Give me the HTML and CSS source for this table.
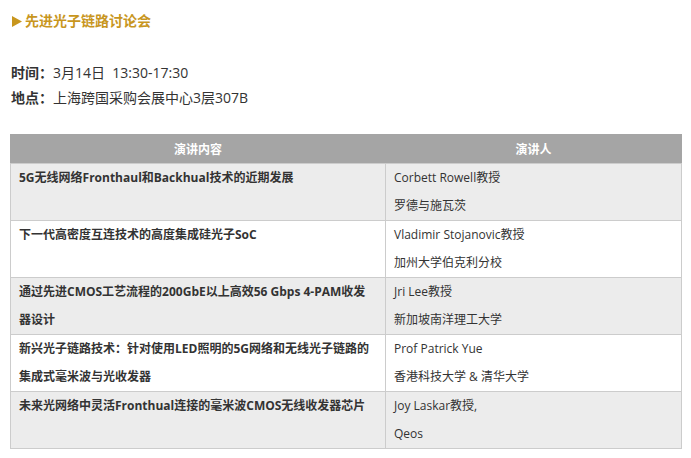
FILE: index.html
```html
<!DOCTYPE html>
<html lang="zh-CN">
<head>
<meta charset="utf-8">
<title>先进光子链路讨论会</title>
<link rel="stylesheet" href="styles.css">
</head>
<body>
<h3 class="title"><svg class="arrow" width="10" height="11" viewBox="0 0 10 11" aria-hidden="true"><polygon points="0,0 10,5.5 0,11" fill="#c8961e"/></svg>先进光子链路讨论会</h3>
<div class="info">
  <p><b>时间：</b>3月14日&nbsp; 13:30-17:30</p>
  <p><b>地点：</b>上海跨国采购会展中心3层307B</p>
</div>
<table class="agenda">
  <colgroup><col class="c-topic"><col class="c-speaker"></colgroup>
  <thead>
    <tr><th>演讲内容</th><th>演讲人</th></tr>
  </thead>
  <tbody>
    <tr class="odd"><td class="topic">5G无线网络Fronthaul和Backhual技术的近期发展</td><td>Corbett Rowell教授<br>罗德与施瓦茨</td></tr>
    <tr><td class="topic">下一代高密度互连技术的高度集成硅光子SoC</td><td>Vladimir Stojanovic教授<br>加州大学伯克利分校</td></tr>
    <tr class="odd"><td class="topic">通过先进CMOS工艺流程的200GbE以上高效56 Gbps 4-PAM收发器设计</td><td>Jri Lee教授<br>新加坡南洋理工大学</td></tr>
    <tr><td class="topic">新兴光子链路技术：针对使用LED照明的5G网络和无线光子链路的集成式毫米波与光收发器</td><td>Prof Patrick Yue<br>香港科技大学 &amp; 清华大学</td></tr>
    <tr class="odd"><td class="topic">未来光网络中灵活Fronthual连接的毫米波CMOS无线收发器芯片</td><td>Joy Laskar教授,<br>Qeos</td></tr>
  </tbody>
</table>
</body>
</html>
```
FILE: styles.css
```css
html, body {
  margin: 0;
  padding: 0;
  background: #fff;
}
body {
  padding: 9px 10px 0 10px;
  font-family: "Open Sans", "Noto Sans CJK SC", sans-serif;
  color: #333;
}
.title {
  margin: 0 0 0 2px;
  height: 24px;
  font-size: 14px;
  line-height: 24px;
  font-weight: bold;
  color: #c8961e;
}
.arrow {
  display: inline-block;
  vertical-align: -1px;
  margin-right: 3px;
}
.info {
  margin: 27px 0 0 1px;
  font-size: 14px;
  line-height: 25px;
}
.info p {
  margin: 0;
}
.agenda {
  margin-top: 24px;
  width: 671px;
  border-collapse: collapse;
  table-layout: fixed;
  font-size: 12px;
  border: 1px solid #ccc;
}
.c-topic { width: 375px; }
.c-speaker { width: 296px; }
.agenda th {
  background: #a5a5a5;
  color: #fff;
  font-weight: bold;
  height: 28px;
  padding: 0;
  text-align: center;
  border: 1px solid #a5a5a5;
  border-bottom-color: #ccc;
}
.agenda td {
  border: 1px solid #ccc;
  padding: 0 8px;
  line-height: 28px;
  height: 56px;
  vertical-align: top;
  text-align: left;
}
.agenda tr.odd td {
  background: #ececec;
}
.agenda td.topic {
  font-weight: bold;
}
```
